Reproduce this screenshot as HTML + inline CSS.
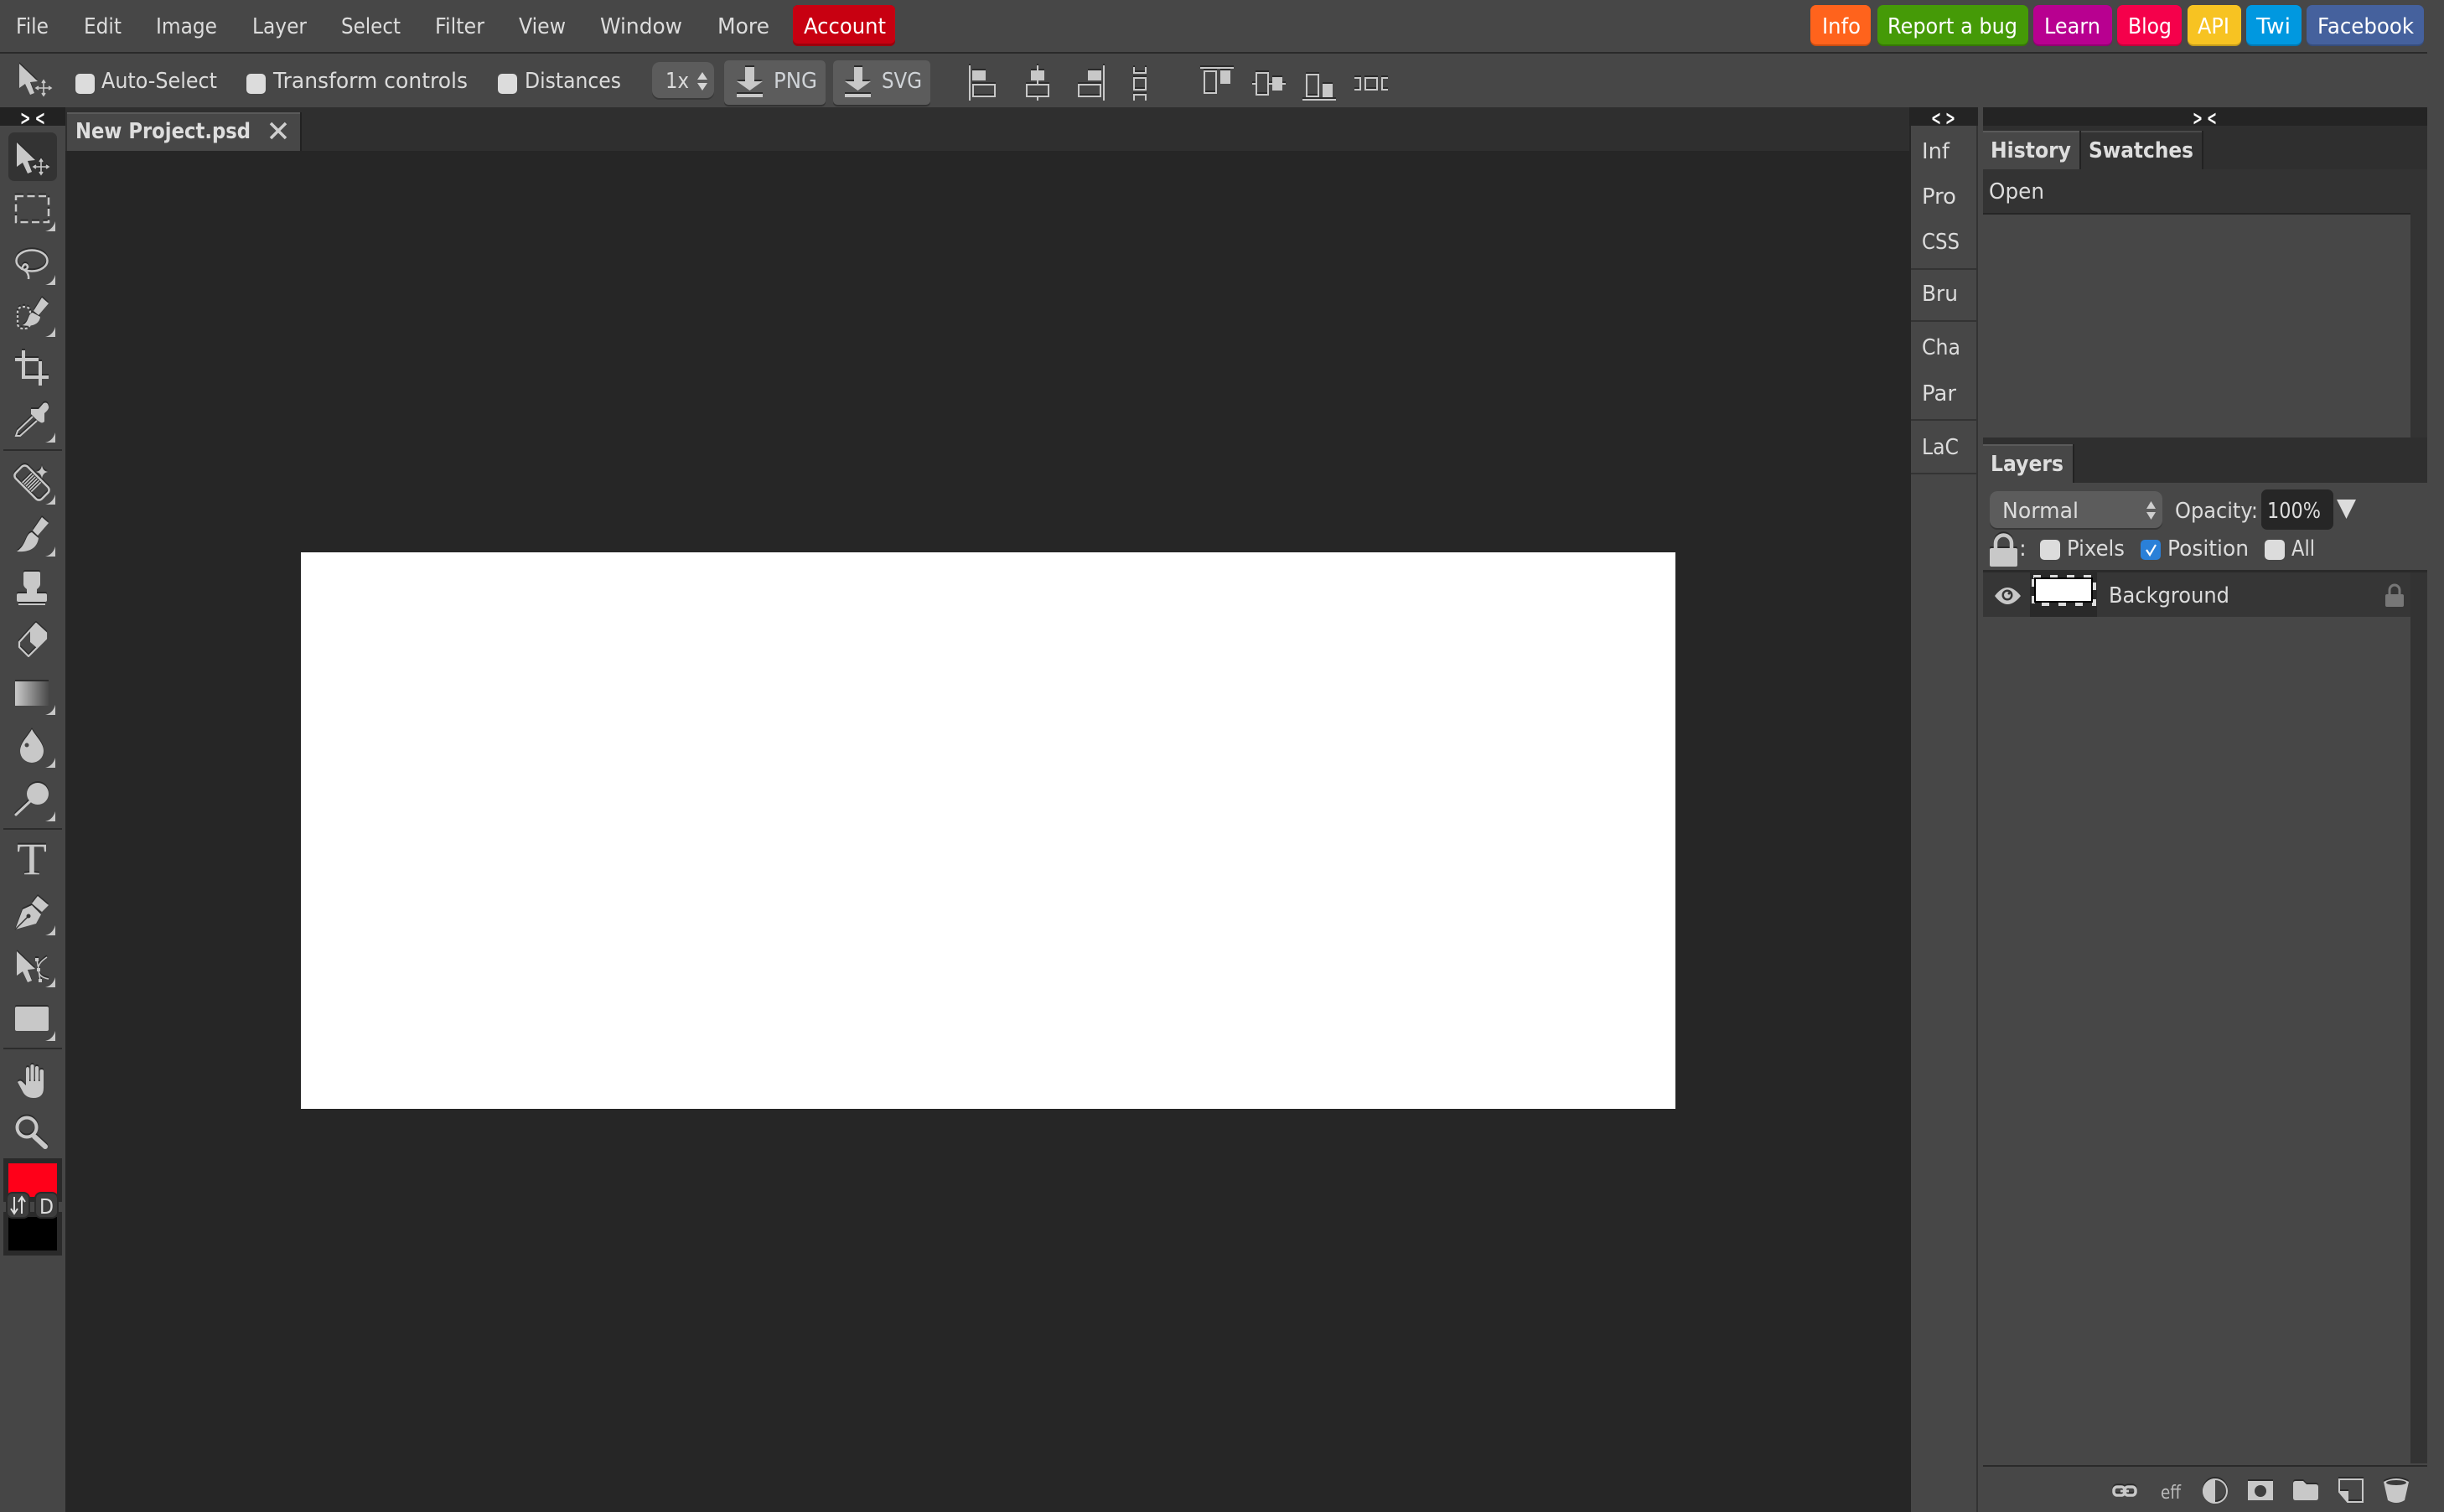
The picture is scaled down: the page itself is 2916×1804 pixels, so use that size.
<!DOCTYPE html>
<html><head><meta charset="utf-8"><title>Photopea</title>
<style>
html,body{margin:0;padding:0;background:#474747;width:2916px;height:1804px;overflow:hidden}
svg{display:block;position:absolute;left:0;top:0}
text{font-family:"DejaVu Sans","Liberation Sans",sans-serif;font-size:26px;fill:#dcdcdc}
.b{font-weight:bold;fill:#dedede;font-size:26px}
.w{fill:#fff}
.ic{filter:drop-shadow(0 -2px 0 #2b2b2b)}
.f{fill:#c8c8c8}
.s{fill:none;stroke:#c8c8c8;stroke-width:2}
</style></head><body>
<svg width="2916" height="1804" viewBox="0 0 2916 1804" xmlns="http://www.w3.org/2000/svg">
<defs>
<linearGradient id="g"><stop offset="0" stop-color="#cacaca"/><stop offset="1" stop-color="#4a4a4a"/></linearGradient>
<g id="arrow"><path d="M20 170L42 191L33 192L38 205L33 207L27 194L20 199Z"/></g>
<path id="tri" d="M0 -12V0H-12Q-3 -2 0 -12Z" fill="#c8c8c8"/>
</defs>

<rect width="2916" height="1804" fill="#474747"/>
<rect y="62" width="2896" height="2" fill="#2a2a2a"/>

<!-- menu -->
<text x="19" y="40" textLength="39" lengthAdjust="spacingAndGlyphs">File</text>
<text x="100" y="40" textLength="45" lengthAdjust="spacingAndGlyphs">Edit</text>
<text x="186" y="40" textLength="73" lengthAdjust="spacingAndGlyphs">Image</text>
<text x="301" y="40" textLength="65" lengthAdjust="spacingAndGlyphs">Layer</text>
<text x="407" y="40" textLength="71" lengthAdjust="spacingAndGlyphs">Select</text>
<text x="519" y="40" textLength="59" lengthAdjust="spacingAndGlyphs">Filter</text>
<text x="619" y="40" textLength="56" lengthAdjust="spacingAndGlyphs">View</text>
<text x="716" y="40" textLength="98" lengthAdjust="spacingAndGlyphs">Window</text>
<text x="856" y="40" textLength="62" lengthAdjust="spacingAndGlyphs">More</text>

<!-- coloured buttons -->
<rect x="946" y="6" width="122" height="49" rx="6" fill="#9c000c"/><rect x="946" y="6" width="122" height="46" rx="6" fill="#c80011"/>
<text class="w" x="959" y="40" textLength="98" lengthAdjust="spacingAndGlyphs">Account</text>
<rect x="2160" y="6" width="72" height="49" rx="7" fill="#c94d12"/><rect x="2160" y="6" width="72" height="47" rx="7" fill="#ff631c"/>
<text class="w" x="2174" y="40" textLength="46" lengthAdjust="spacingAndGlyphs">Info</text>
<rect x="2240" y="6" width="180" height="49" rx="7" fill="#357805"/><rect x="2240" y="6" width="180" height="47" rx="7" fill="#459a07"/>
<text class="w" x="2252" y="40" textLength="155" lengthAdjust="spacingAndGlyphs">Report a bug</text>
<rect x="2426" y="6" width="94" height="49" rx="7" fill="#8f0070"/><rect x="2426" y="6" width="94" height="47" rx="7" fill="#b80090"/>
<text class="w" x="2439" y="40" textLength="67" lengthAdjust="spacingAndGlyphs">Learn</text>
<rect x="2526" y="6" width="77" height="49" rx="7" fill="#c0003a"/><rect x="2526" y="6" width="77" height="47" rx="7" fill="#f5004b"/>
<text class="w" x="2539" y="40" textLength="52" lengthAdjust="spacingAndGlyphs">Blog</text>
<rect x="2610" y="6" width="64" height="49" rx="7" fill="#c29a1b"/><rect x="2610" y="6" width="64" height="47" rx="7" fill="#f7c322"/>
<text class="w" x="2622" y="40" textLength="38" lengthAdjust="spacingAndGlyphs">API</text>
<rect x="2680" y="6" width="66" height="49" rx="7" fill="#0077b0"/><rect x="2680" y="6" width="66" height="47" rx="7" fill="#0098e0"/>
<text class="w" x="2692" y="40" textLength="41" lengthAdjust="spacingAndGlyphs">Twi</text>
<rect x="2752" y="6" width="140" height="49" rx="7" fill="#364d7c"/><rect x="2752" y="6" width="140" height="47" rx="7" fill="#45619d"/>
<text class="w" x="2765" y="40" textLength="115" lengthAdjust="spacingAndGlyphs">Facebook</text>

<!-- options bar -->
<g class="ic f"><use href="#arrow" x="3" y="-94"/></g>
<path d="M44 105H60M52 97V113M50 99L52 96L54 99M50 111L52 114L54 111M46 103L43 105L46 107M58 103L61 105L58 107" fill="none" stroke="#c8c8c8" stroke-width="1.6"/>
<rect x="90" y="88" width="23" height="24" rx="5" fill="#dcdcdc"/>
<text x="121" y="105" textLength="138" lengthAdjust="spacingAndGlyphs">Auto-Select</text>
<rect x="294" y="88" width="23" height="24" rx="5" fill="#dcdcdc"/>
<text x="326" y="105" textLength="232" lengthAdjust="spacingAndGlyphs">Transform controls</text>
<rect x="594" y="88" width="23" height="24" rx="5" fill="#dcdcdc"/>
<text x="626" y="105" textLength="115" lengthAdjust="spacingAndGlyphs">Distances</text>

<rect x="778" y="74" width="74" height="45" rx="9" fill="#383838"/><rect x="778" y="74" width="74" height="43" rx="9" fill="#5c5c5c"/>
<text x="794" y="105" textLength="28" lengthAdjust="spacingAndGlyphs">1x</text>
<path d="M838 86L844 95H832ZM838 108L844 99H832Z" fill="#d4d4d4"/>

<rect x="864" y="72" width="121" height="55" rx="5" fill="#333"/><rect x="864" y="72" width="121" height="53" rx="5" fill="#5c5c5c"/>
<g class="ic f"><path d="M889 80H900V97H910L894.500 108L879 97H889Z"/><rect x="879" y="112" width="31" height="4"/></g>
<text x="923" y="105" textLength="52" lengthAdjust="spacingAndGlyphs" style="fill:#d0d4d8">PNG</text>
<rect x="994" y="72" width="116" height="55" rx="5" fill="#333"/><rect x="994" y="72" width="116" height="53" rx="5" fill="#5c5c5c"/>
<g class="ic f"><path d="M1019 80H1029V97H1039L1023.500 108L1008 97H1019Z"/><rect x="1008" y="112" width="31" height="4"/></g>
<text x="1052" y="105" textLength="48" lengthAdjust="spacingAndGlyphs" style="fill:#d0d4d8">SVG</text>

<!-- align icons -->
<g class="ic">
<rect class="f" x="1156" y="78" width="2" height="42"/><rect class="f" x="1160" y="84" width="16" height="12"/><rect class="s" x="1161" y="101" width="26" height="14"/>
<rect class="f" x="1237" y="78" width="2" height="8"/><rect class="f" x="1237" y="96" width="2" height="4"/><rect class="f" x="1237" y="116" width="2" height="4"/><rect class="f" x="1230" y="84" width="16" height="12"/><rect class="s" x="1225" y="101" width="26" height="14"/>
<rect class="f" x="1316" y="78" width="2" height="42"/><rect class="f" x="1298" y="84" width="16" height="12"/><rect class="s" x="1287" y="101" width="26" height="14"/>
<path class="s" d="M1353 80V87H1367V80M1353 120V113H1367V120"/><rect class="s" x="1353" y="93" width="14" height="14"/>
<rect class="f" x="1432" y="80" width="40" height="2"/><rect class="s" x="1437" y="85" width="14" height="26"/><rect class="f" x="1456" y="84" width="12" height="16"/>
<rect class="f" x="1494" y="99" width="4" height="2"/><rect class="f" x="1514" y="99" width="4" height="2"/><rect class="f" x="1530" y="99" width="4" height="2"/><rect class="s" x="1499" y="87" width="14" height="26"/><rect class="f" x="1518" y="92" width="12" height="16"/>
<rect class="s" x="1559" y="89" width="14" height="26"/><rect class="f" x="1578" y="100" width="12" height="16"/><rect class="f" x="1554" y="118" width="40" height="2"/>
<path class="s" d="M1616 93H1623V107H1616M1656 93H1649V107H1656"/><rect class="s" x="1629" y="93" width="14" height="14"/>
</g>

<!-- canvas zone -->
<rect x="78" y="128" width="2202" height="1676" fill="#262626"/>
<rect x="78" y="128" width="2202" height="52" fill="#2f2f2f"/>
<rect x="80" y="134" width="278" height="46" fill="#474747"/>
<rect x="80" y="134" width="278" height="2" fill="#5a5a5a"/>
<rect x="358" y="134" width="2" height="46" fill="#222"/>
<text class="b" x="90" y="165" textLength="209" lengthAdjust="spacingAndGlyphs">New Project.psd</text>
<path d="M323 147L341 165M341 147L323 165" stroke="#cfcfcf" stroke-width="3.500" fill="none"/>
<rect x="359" y="659" width="1640" height="664" fill="#fff"/>

<!-- left tools -->
<rect y="128" width="78" height="22" fill="#222"/>
<text class="b w" x="24" y="149" textLength="30" lengthAdjust="spacingAndGlyphs" style="font-size:24px">&gt; &lt;</text>
<rect y="150" width="78" height="1654" fill="#464646"/>
<rect x="10" y="158" width="58" height="58" rx="7" fill="#333"/>

<g class="ic">
<use href="#arrow" class="f"/>
<path d="M41 199H57M49 191V207M47 193L49 190L51 193M47 205L49 208L51 205M43 197L40 199L43 201M55 197L58 199L55 201" fill="none" stroke="#c8c8c8" stroke-width="1.600"/>
<rect x="19" y="234" width="39" height="31" fill="none" stroke="#c8c8c8" stroke-width="2.500" stroke-dasharray="9 4.500"/>
<ellipse cx="38" cy="311" rx="18.500" ry="12.500" fill="none" stroke="#c8c8c8" stroke-width="2.500"/>
<path d="M26 322Q28 313 32 316Q35 320 29 322Q35 326 34 333" fill="none" stroke="#c8c8c8" stroke-width="2.500"/>
<rect x="21" y="366" width="15" height="26" rx="6" fill="none" stroke="#c8c8c8" stroke-width="2.200" stroke-dasharray="3 2.500"/>
<path class="f" d="M50 355L58 362L46 376L40 371ZM39 373C33 374 35 384 27 388C36 390 47 388 48 378Z"/>
<path class="f" d="M26 418h4v9h16v4h-16v17h16v-17h4v17h8v4h-8v8h-4v-8h-20v-21h-8v-4h8z"/>
<path class="f" d="M37 488L46 488L52 481Q57 479 58 485Q59 488 53 493L53 503Q50 506 47 503L45 502L37 494Z"/>
<path d="M39 497L21 514L19 520L24 520L44 502" fill="none" stroke="#c8c8c8" stroke-width="2"/>
<g transform="rotate(45 38 576)"><rect x="16" y="566" width="44" height="20" rx="5" fill="none" stroke="#c8c8c8" stroke-width="2.500"/><path d="M30 568V584M33 568V584M36 568V584M39 568V584M42 568V584M45 568V584" stroke="#c8c8c8" stroke-width="1.600"/></g>
<path class="f" d="M50 555Q51 562 57 563Q51 564 50 571Q49 564 43 563Q49 562 50 555Z"/>
<path class="f" d="M50 617L58 624L45 639L39 633ZM38 635C30 637 32 650 20 658C32 659 44 656 46 642Z"/>
<path class="f" d="M30 682H46Q48 682 48 684V697Q48 700 44 703V708H54Q56 708 56 710V716Q56 718 54 718H22Q20 718 20 716V710Q20 708 22 708H32V703Q28 700 28 697V684Q28 682 30 682Z"/>
<rect class="f" x="22" y="720" width="32" height="2"/>
<path d="M43 744L55 755V762L34 783L23 772V766Z" fill="none" stroke="#c8c8c8" stroke-width="2.200" stroke-linejoin="round"/>
<path class="f" d="M43 744L56 756V762L44 773L36 766V752Z"/>
<rect x="18" y="813" width="40" height="29" fill="url(#g)"/>
<path class="f" d="M38 870C42 878 52 886 52 896A14 14 0 0 1 24 896C24 886 34 878 38 870Z"/>
<circle class="f" cx="45" cy="947" r="13"/>
<path d="M36 956L19 972" stroke="#c8c8c8" stroke-width="3" stroke-linecap="round"/>
<text x="20" y="1043" textLength="36" lengthAdjust="spacingAndGlyphs" style="font-family:'Liberation Serif',serif;font-size:54px;fill:#c8c8c8">T</text>
<path class="f" d="M18 1109L27 1085L38 1080L49 1091L43 1102ZM38 1078L45 1069L58 1080L50 1088Z"/>
<use href="#arrow" class="f" y="965"/>
<path d="M44 1145L46 1157L48 1170M56 1142Q44 1150 46 1157Q46 1166 58 1168" fill="none" stroke="#c8c8c8" stroke-width="1.500"/>
<rect class="f" x="42" y="1143" width="4" height="4"/><rect class="f" x="44" y="1155" width="4" height="4"/><rect class="f" x="46" y="1168" width="4" height="4"/>
<rect class="f" x="18" y="1201" width="40" height="29" rx="2"/>
<path class="f" d="M21 1291Q24 1288 27 1291L31 1295V1276Q31 1273 33 1273Q35 1273 35 1276V1290H36.500V1272Q36.500 1270 38.500 1270Q40.500 1270 40.500 1272V1290H42V1274Q42 1272 44 1272Q46 1272 46 1274V1290H47.500V1278Q47.500 1276 49.500 1276Q52 1276 52 1278V1298Q52 1310 40 1310Q32 1310 28 1304Z"/>
<circle cx="32" cy="1345" r="11.500" fill="none" stroke="#c8c8c8" stroke-width="4"/>
<path d="M41 1356L54 1368" stroke="#c8c8c8" stroke-width="6" stroke-linecap="round"/>
</g>
<path d="M18 1109L33 1094" stroke="#333" stroke-width="1.500"/><circle cx="34" cy="1093" r="2.500" fill="#333"/>
<circle cx="32" cy="889" r="2.500" fill="#444"/>

<use href="#tri" x="66" y="276"/><use href="#tri" x="66" y="340"/><use href="#tri" x="66" y="402"/><use href="#tri" x="66" y="528"/>
<use href="#tri" x="66" y="602"/><use href="#tri" x="66" y="664"/><use href="#tri" x="66" y="853"/><use href="#tri" x="66" y="916"/><use href="#tri" x="66" y="980"/>
<use href="#tri" x="66" y="1116"/><use href="#tri" x="66" y="1178"/><use href="#tri" x="66" y="1242"/>

<rect x="4" y="536" width="70" height="2" fill="#2c2c2c"/>
<rect x="4" y="988" width="70" height="2" fill="#2c2c2c"/>
<rect x="4" y="1250" width="70" height="2" fill="#2c2c2c"/>

<!-- colours -->
<rect x="4" y="1382" width="70" height="52" fill="#2a2a2a"/>
<rect x="10" y="1388" width="58" height="40" fill="#ff0019"/>
<rect x="4" y="1446" width="70" height="52" fill="#2a2a2a"/>
<rect x="10" y="1452" width="58" height="40" fill="#000"/>
<rect x="8" y="1423" width="27" height="30" rx="7" fill="#3d3d3d" stroke="#2a2a2a" stroke-width="2"/>
<rect x="42" y="1423" width="27" height="30" rx="7" fill="#3d3d3d" stroke="#2a2a2a" stroke-width="2"/>
<path d="M17 1428V1447M13 1442L17 1448L21 1442M26 1448V1429M22 1434L26 1428L30 1434" fill="none" stroke="#dcdcdc" stroke-width="2"/>
<text x="47" y="1448" textLength="17" lengthAdjust="spacingAndGlyphs" style="font-size:25px;fill:#dcdcdc">D</text>

<!-- side column -->
<rect x="2278" y="128" width="82" height="22" fill="#242424"/>
<rect x="2278" y="150" width="2" height="1654" fill="#262626"/>
<rect x="2358" y="150" width="2" height="1654" fill="#333"/>
<rect x="2280" y="150" width="78" height="1654" fill="#474747"/>
<text class="b w" x="2304" y="149" textLength="29" lengthAdjust="spacingAndGlyphs" style="font-size:24px">&lt; &gt;</text>
<text x="2293" y="189" textLength="33" lengthAdjust="spacingAndGlyphs">Inf</text>
<text x="2293" y="243" textLength="41" lengthAdjust="spacingAndGlyphs">Pro</text>
<text x="2293" y="297" textLength="45" lengthAdjust="spacingAndGlyphs">CSS</text>
<rect x="2280" y="320" width="78" height="2" fill="#333"/>
<text x="2293" y="359" textLength="43" lengthAdjust="spacingAndGlyphs">Bru</text>
<rect x="2280" y="382" width="78" height="2" fill="#333"/>
<text x="2293" y="423" textLength="46" lengthAdjust="spacingAndGlyphs">Cha</text>
<text x="2293" y="478" textLength="41" lengthAdjust="spacingAndGlyphs">Par</text>
<rect x="2280" y="500" width="78" height="2" fill="#333"/>
<text x="2293" y="542" textLength="44" lengthAdjust="spacingAndGlyphs">LaC</text>
<rect x="2280" y="564" width="78" height="2" fill="#333"/>

<!-- history panel -->
<rect x="2366" y="128" width="530" height="22" fill="#242424"/>
<text class="b w" x="2616" y="149" textLength="29" lengthAdjust="spacingAndGlyphs" style="font-size:24px">&gt; &lt;</text>
<rect x="2366" y="150" width="530" height="52" fill="#2f2f2f"/>
<rect x="2366" y="156" width="115" height="46" fill="#474747"/><rect x="2366" y="156" width="115" height="2" fill="#5a5a5a"/>
<rect x="2481" y="156" width="146" height="46" fill="#333"/><rect x="2481" y="156" width="146" height="2" fill="#4a4a4a"/>
<rect x="2481" y="156" width="2" height="46" fill="#222"/><rect x="2627" y="156" width="2" height="46" fill="#222"/>
<text class="b" x="2375" y="188" textLength="96" lengthAdjust="spacingAndGlyphs">History</text>
<text class="b" x="2492" y="188" textLength="125" lengthAdjust="spacingAndGlyphs">Swatches</text>
<rect x="2366" y="202" width="530" height="320" fill="#333"/>
<text x="2373" y="237" textLength="66" lengthAdjust="spacingAndGlyphs">Open</text>
<rect x="2366" y="254" width="510" height="2" fill="#262626"/>
<rect x="2366" y="256" width="510" height="266" fill="#474747"/>

<!-- layers panel -->
<rect x="2366" y="522" width="530" height="54" fill="#2f2f2f"/>
<rect x="2366" y="530" width="107" height="46" fill="#474747"/><rect x="2366" y="530" width="107" height="2" fill="#5a5a5a"/>
<rect x="2473" y="530" width="2" height="46" fill="#222"/>
<text class="b" x="2375" y="562" textLength="87" lengthAdjust="spacingAndGlyphs">Layers</text>

<rect x="2374" y="586" width="206" height="46" rx="9" fill="#363636"/><rect x="2374" y="586" width="206" height="44" rx="9" fill="#5c5c5c"/>
<text x="2389" y="618" textLength="91" lengthAdjust="spacingAndGlyphs">Normal</text>
<path d="M2566.500 598L2572 607H2561ZM2566.500 620L2572 611H2561Z" fill="#cfcfcf"/>
<text x="2595" y="618" textLength="99" lengthAdjust="spacingAndGlyphs">Opacity:</text>
<rect x="2698" y="584" width="86" height="48" rx="7" fill="#262626"/>
<text x="2705" y="618" textLength="64" lengthAdjust="spacingAndGlyphs">100%</text>
<path d="M2788 596H2811L2799.500 619Z" fill="#dcdcdc"/>

<g class="ic">
<path d="M2381 656V648A9.500 9.500 0 0 1 2400 648V656" fill="none" stroke="#c8c8c8" stroke-width="4.500"/>
<rect class="f" x="2374" y="654" width="33" height="22" rx="2"/>
</g>
<text x="2409" y="663">:</text>
<rect x="2434" y="644" width="24" height="24" rx="5" fill="#dcdcdc"/>
<text x="2466" y="663" textLength="69" lengthAdjust="spacingAndGlyphs">Pixels</text>
<rect x="2554" y="644" width="24" height="24" rx="5" fill="#2a80d8"/>
<path d="M2561 656L2565 662L2572 650" fill="none" stroke="#fff" stroke-width="2.200"/>
<text x="2586" y="663" textLength="97" lengthAdjust="spacingAndGlyphs">Position</text>
<rect x="2702" y="644" width="24" height="24" rx="5" fill="#dcdcdc"/>
<text x="2734" y="663" textLength="28" lengthAdjust="spacingAndGlyphs">All</text>

<rect x="2366" y="680" width="530" height="3" fill="#2a2a2a"/>
<rect x="2366" y="683" width="510" height="53" fill="#363636"/>
<rect x="2876" y="683" width="20" height="1063" fill="#333"/>
<rect x="2422" y="683" width="80" height="53" fill="#292929"/>
<rect x="2426" y="688" width="73" height="33" fill="none" stroke="#dcdcdc" stroke-width="4" stroke-dasharray="9 11"/>
<rect x="2428" y="690" width="68" height="28" fill="#fff" stroke="#000" stroke-width="2"/>
<path d="M2380 711Q2395 691 2411 711Q2395 731 2380 711Z" fill="#c8c8c8"/>
<circle cx="2395" cy="710" r="6.500" fill="#363636"/><circle cx="2395" cy="710" r="4" fill="#c8c8c8"/><circle cx="2397" cy="708" r="1.500" fill="#363636"/>
<text x="2516" y="719" textLength="144" lengthAdjust="spacingAndGlyphs">Background</text>
<path d="M2851 710V704A6 6 0 0 1 2863 704V710" fill="none" stroke="#777" stroke-width="3"/>
<rect x="2846" y="709" width="22" height="15" rx="2" fill="#777"/>

<rect x="2366" y="1748" width="530" height="2" fill="#2a2a2a"/>
<!-- bottom icons -->
<g class="ic">
<rect x="2522" y="1774" width="13" height="10" rx="4" fill="none" stroke="#c8c8c8" stroke-width="3.500"/>
<rect x="2535" y="1774" width="13" height="10" rx="4" fill="none" stroke="#c8c8c8" stroke-width="3.500"/>
<path d="M2530 1779H2540" stroke="#c8c8c8" stroke-width="3"/>
<circle cx="2643" cy="1779" r="14" fill="none" stroke="#c8c8c8" stroke-width="2"/>
<path class="f" d="M2643 1764A15 15 0 0 0 2643 1794Z"/>
<rect class="f" x="2682" y="1767" width="30" height="23"/>
<path class="f" d="M2736 1770Q2736 1767 2739 1767H2748L2752 1771H2763Q2766 1771 2766 1774V1787Q2766 1790 2763 1790H2739Q2736 1790 2736 1787Z"/>
<path d="M2791 1765H2819V1792H2801L2791 1780Z" fill="none" stroke="#c8c8c8" stroke-width="2"/>
<path class="f" d="M2791 1779H2802V1792Z"/>
<path class="f" d="M2844 1768Q2859 1760 2874 1768L2869 1790Q2859 1796 2849 1790Z"/>
</g>
<circle cx="2697" cy="1779" r="7" fill="#3e3e3e"/>
<ellipse cx="2859" cy="1769" rx="12" ry="3" fill="#3a3a3a"/>
<text x="2578" y="1788" textLength="24" lengthAdjust="spacingAndGlyphs" style="font-size:22px;fill:#bbb">eff</text>
</svg>
</body></html>
